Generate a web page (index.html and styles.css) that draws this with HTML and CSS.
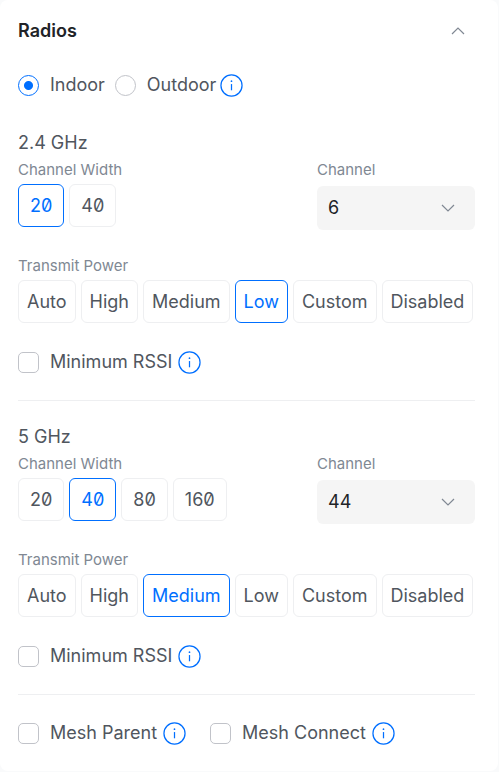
FILE: index.html
```html
<!DOCTYPE html>
<html lang="en">
<head>
    <meta charset="UTF-8">
    <meta name="viewport" content="width=device-width, initial-scale=1.0">
    <title>Radios</title>
    <link rel="stylesheet" href="styles.css">
</head>
<body>
    <svg class="symbols" aria-hidden="true">
        <symbol id="info" viewBox="0 0 24 24">
            <circle cx="12" cy="12" r="11" />
            <path d="M12 10.5v6.5" />
            <circle class="dot" cx="12" cy="7.5" r="0.9" />
        </symbol>
    </svg>

    <section class="card">
        <header class="card-header">
            <h1>Radios</h1>
            <button type="button" class="collapse" aria-label="Collapse" aria-expanded="true">
                <svg class="chevron" viewBox="0 0 14 8"><path d="M1 7l6-6 6 6" /></svg>
            </button>
        </header>

        <div class="option-row location">
            <label class="option"><input type="radio" name="location" checked>Indoor</label>
            <label class="option"><input type="radio" name="location">Outdoor</label>
            <svg class="info"><use href="#info" /></svg>
        </div>

        <div class="band">
            <h2>2.4 GHz</h2>
            <div class="channel-row">
                <div>
                    <span class="field-label" id="width24">Channel Width</span>
                    <div class="toggle-group widths" role="group" aria-labelledby="width24">
                        <button type="button" class="toggle selected">20</button>
                        <button type="button" class="toggle">40</button>
                    </div>
                </div>
                <div>
                    <label class="field-label" for="channel24">Channel</label>
                    <div class="select-box">
                        <select id="channel24">
                            <option>1</option>
                            <option selected>6</option>
                            <option>11</option>
                        </select>
                        <svg class="chevron" viewBox="0 0 14 8"><path d="M1 1l6 6 6-6" /></svg>
                    </div>
                </div>
            </div>
            <span class="field-label power-label" id="power24">Transmit Power</span>
            <div class="toggle-group" role="group" aria-labelledby="power24">
                <button type="button" class="toggle">Auto</button>
                <button type="button" class="toggle">High</button>
                <button type="button" class="toggle">Medium</button>
                <button type="button" class="toggle selected">Low</button>
                <button type="button" class="toggle">Custom</button>
                <button type="button" class="toggle">Disabled</button>
            </div>
            <div class="option-row rssi">
                <label class="option"><input type="checkbox">Minimum RSSI</label>
                <svg class="info"><use href="#info" /></svg>
            </div>
        </div>

        <div class="band">
            <h2>5 GHz</h2>
            <div class="channel-row">
                <div>
                    <span class="field-label" id="width5">Channel Width</span>
                    <div class="toggle-group widths" role="group" aria-labelledby="width5">
                        <button type="button" class="toggle">20</button>
                        <button type="button" class="toggle selected">40</button>
                        <button type="button" class="toggle">80</button>
                        <button type="button" class="toggle">160</button>
                    </div>
                </div>
                <div>
                    <label class="field-label" for="channel5">Channel</label>
                    <div class="select-box">
                        <select id="channel5">
                            <option>36</option>
                            <option selected>44</option>
                            <option>149</option>
                        </select>
                        <svg class="chevron" viewBox="0 0 14 8"><path d="M1 1l6 6 6-6" /></svg>
                    </div>
                </div>
            </div>
            <span class="field-label power-label" id="power5">Transmit Power</span>
            <div class="toggle-group" role="group" aria-labelledby="power5">
                <button type="button" class="toggle">Auto</button>
                <button type="button" class="toggle">High</button>
                <button type="button" class="toggle selected">Medium</button>
                <button type="button" class="toggle">Low</button>
                <button type="button" class="toggle">Custom</button>
                <button type="button" class="toggle">Disabled</button>
            </div>
            <div class="option-row rssi">
                <label class="option"><input type="checkbox">Minimum RSSI</label>
                <svg class="info"><use href="#info" /></svg>
            </div>
        </div>

        <div class="mesh">
            <div class="option-row">
                <label class="option"><input type="checkbox">Mesh Parent</label>
                <svg class="info"><use href="#info" /></svg>
            </div>
            <div class="option-row">
                <label class="option"><input type="checkbox">Mesh Connect</label>
                <svg class="info"><use href="#info" /></svg>
            </div>
        </div>
    </section>
</body>
</html>
```

FILE: styles.css
```css
* {
    box-sizing: border-box;
}

body {
    margin: 0;
    padding: 0 1px 1px 0;
    background: #f9fafb;
    color: #50565e;
    font-family: Inter, "Liberation Sans", sans-serif;
    font-size: 18px;
    line-height: 24px;
}

button, select {
    font: inherit;
    color: inherit;
}

.symbols {
    display: none;
}

.card {
    background: #fff;
    border-radius: 8px;
    padding: 0 23px 0 18px;
}

.card-header {
    display: flex;
    align-items: center;
    justify-content: space-between;
    height: 62px;
}

h1 {
    margin: 0;
    color: #212327;
    font-size: 18px;
    font-weight: 600;
}

h2 {
    margin: 0 0 5px;
    font-size: 18px;
    font-weight: 400;
}

.collapse {
    display: flex;
    padding: 10px;
    border: none;
    background: none;
    cursor: pointer;
}

.chevron {
    width: 14px;
    height: 8px;
    fill: none;
    stroke: #808893;
    stroke-width: 1.2;
}

.option-row {
    display: flex;
    align-items: center;
    gap: 6px;
}

.location {
    gap: 4px;
    margin: 11px 0 34px;
}

.location .option + .option {
    margin-left: 6px;
}

.option {
    display: flex;
    align-items: center;
    gap: 11px;
}

.option input {
    appearance: none;
    width: 21px;
    height: 21px;
    margin: 0;
    border: 1px solid #c1c3c9;
    border-radius: 5px;
    background: #fff;
}

.option input[type="radio"] {
    border-radius: 50%;
}

.option input[type="radio"]:checked {
    border-color: #006fff;
    background: radial-gradient(circle, #006fff 4px, #fff 5px);
}

.option input[type="checkbox"]:checked {
    border-color: #006fff;
    background: #006fff;
}

.info {
    width: 23px;
    height: 23px;
    fill: none;
    stroke: #006fff;
    stroke-width: 1.3;
}

.dot {
    fill: #006fff;
    stroke: none;
}

.band {
    padding-bottom: 26px;
    margin-bottom: 24px;
    border-bottom: 1px solid #eeeff1;
}

.channel-row {
    display: grid;
    grid-template-columns: 1fr 158px;
}

.field-label {
    display: block;
    margin-bottom: 4px;
    color: #808893;
    font-size: 15px;
    line-height: 20px;
}

.power-label {
    margin-top: 26px;
}

.toggle-group {
    display: flex;
    gap: 5px;
}

.toggle {
    height: 43px;
    padding: 0 8px;
    border: 1px solid #eeeff1;
    border-radius: 6px;
    background: #fff;
    cursor: pointer;
}

.widths .toggle {
    padding: 0 11px;
    font-feature-settings: "zero";
}

.toggle.selected {
    border-color: #006fff;
    color: #006fff;
}

.select-box {
    display: grid;
    align-items: center;
    margin-top: 6px;
}

.select-box select, .select-box .chevron {
    grid-area: 1 / 1;
}

.select-box select {
    appearance: none;
    width: 100%;
    height: 44px;
    padding: 0 40px 0 11px;
    border: none;
    border-radius: 6px;
    background: #f5f5f5;
    color: #212327;
}

.select-box .chevron {
    justify-self: end;
    margin-right: 20px;
    pointer-events: none;
}

.rssi {
    margin-top: 27px;
}

.mesh {
    display: flex;
    flex-wrap: wrap;
    gap: 24px;
    padding: 2px 0 26px;
}
```
